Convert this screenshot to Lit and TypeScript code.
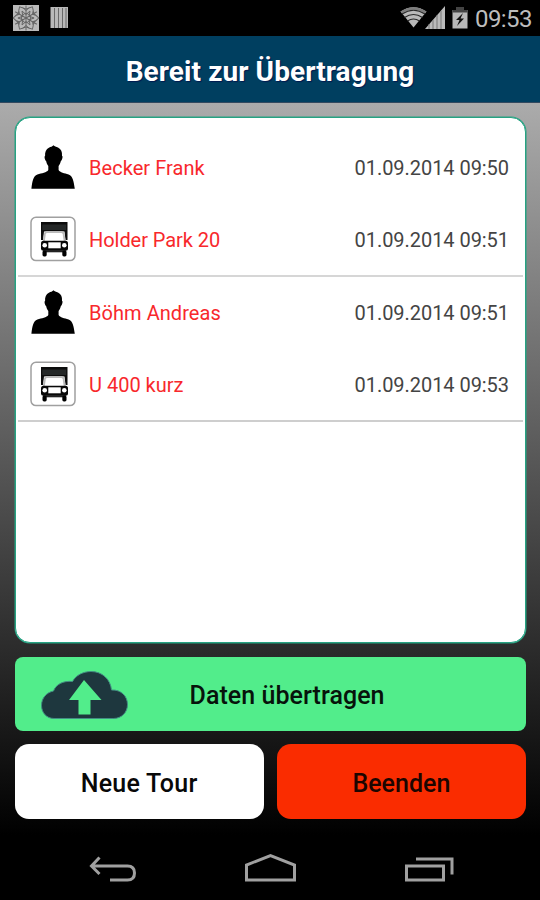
import { LitElement, html, css, svg } from "lit";
import { customElement } from "lit/decorators.js";

interface Entry {
  kind: "person" | "truck";
  name: string;
  time: string;
  fit: string;
}

const groups: Entry[][] = [
  [
    { kind: "person", name: "Becker Frank", time: "01.09.2014 09:50", fit: "a" },
    { kind: "truck", name: "Holder Park 20", time: "01.09.2014 09:51", fit: "b" },
  ],
  [
    { kind: "person", name: "Böhm Andreas", time: "01.09.2014 09:51", fit: "c" },
    { kind: "truck", name: "U 400 kurz", time: "01.09.2014 09:53", fit: "d" },
  ],
];

const person = html`<svg class="icon" width="46" height="46" viewBox="0 0 46 46">
  <path d="M23.500 1.300C24.500 2.300 26 2.700 28 3.500C31.200 5 32.300 8 32 11.800C32.800 12.100 32.600 13.500 32.200 14.800C31.900 16 31.300 16.700 30.800 17.200C30.300 19.400 29.500 20.800 28.600 22V26C30 28.600 34.500 29.200 38.600 30.400C42.800 31.700 43.800 37.500 44.800 44.800H1.400C2.200 37.500 3.200 31.700 7.400 30.400C11.700 29.200 16.800 28.600 18.300 26V22C17.400 20.800 16.600 19.400 16.200 17.200C15.600 16.700 15.100 16 14.800 14.800C14.500 13.500 14.400 12.100 15.100 11.800C14.800 8 16 5.200 18.900 3.700C20.600 2.800 22.500 2.700 23.500 1.300Z"/>
</svg>`;

const truck = html`<svg class="icon" width="46" height="46" viewBox="0 0 46 46">
  <rect x="1" y="1.200" width="44" height="43.400" rx="5" fill="#fff" stroke="#a0a0a0" stroke-width="1.500"/>
  <path d="M11 6H37.500V24H35.500L34.500 15.500H14L13 24H11Z" fill="#0c0c0c"/>
  <path d="M12.300 8.500H36.200V14H12.300Z" fill="#242727"/>
  <path d="M12.800 25L14.200 17Q14.500 15 16.500 15H32Q34 15 34.300 17L35.700 25Z" fill="#bbb"/>
  <path d="M14.800 25L15.800 18.300Q16 17 17.300 17H31.200Q32.500 17 32.700 18.300L33.700 25Z" fill="#fff"/>
  <rect x="11" y="24.800" width="27" height="10" rx="2.500" fill="#080808"/>
  <path d="M18.300 26.300H30.700V32.300H18.300Z" fill="#fff"/>
  <circle cx="14.700" cy="29.300" r="2.300" fill="#fff"/>
  <circle cx="34.300" cy="29.300" r="2.300" fill="#fff"/>
  <path d="M13 34H36V36.300H13Z" fill="#222"/>
  <rect x="12.500" y="34.500" width="4.200" height="5.900" rx="1.600"/>
  <rect x="32.300" y="34.500" width="4.200" height="5.900" rx="1.600"/>
</svg>`;

const arms = [0, 60, 120, 180, 240, 300];

@customElement("app-root")
export class AppRoot extends LitElement {
  static styles = css`
    :host { display: flex; flex-direction: column; width: 540px; height: 900px; overflow: hidden;
      background: #000; font-family: Roboto, "Liberation Sans", sans-serif; color: #000; }
    * { box-sizing: border-box; }
    svg { display: block; flex: none; }
    .status { height: 35.500px; flex: none; display: flex; justify-content: space-between; }
    .clock { display: flex; height: 36px; }
    .time { font-size: 24px; line-height: 38px; color: #bdbdbd; width: 65px; white-space: nowrap; letter-spacing: -0.600px; }
    .head { height: 67px; flex: none; background: #003f60; display: flex; justify-content: center;
      border-bottom: 1px solid #32495f; }
    h1 { margin: 0; font-size: 28px; font-weight: 700; line-height: 71px; color: #fff; white-space: nowrap;
      letter-spacing: 0.080px; text-shadow: 1px 1px 1px #001a50; }
    .body { height: 732.500px; flex: none; padding: 14.500px 14px 0 14.500px;
      background: linear-gradient(#ababab, #000); }
    .list { height: 526px; border: 1px solid #26a282; box-shadow: 0 0 0 0.500px #26a282; border-radius: 15px; background: #fff; padding: 13px 2px 0; }
    .group { height: 145.500px; border-bottom: 2px solid #d6d6d6; }
    .group:last-child { border-bottom: 2px solid #cecece; }
    .row { height: 71.700px; display: flex; align-items: center; padding: 0 14px 0 12.500px; }
    .name { margin-left: 13px; flex: 1; font-size: 20px; line-height: 24px; padding-top: 2px; color: #f8282c; white-space: nowrap; }
    .when { font-size: 20px; line-height: 24px; padding-top: 2px; color: #444; white-space: nowrap; letter-spacing: -0.050px; }
    .a { letter-spacing: 0.050px; } .b { letter-spacing: -0.050px; } .c { letter-spacing: 0.050px; } .d { letter-spacing: 0; }
    button { border: 0; padding: 2px 0 0; margin: 0; font: 500 25px Roboto, "Liberation Sans", sans-serif; color: #07130b;
      height: 75px; display: flex; align-items: center; justify-content: center; white-space: nowrap; border-radius: 14px; }
    .send { width: 100%; height: 74.500px; margin-top: 13.500px; border-radius: 8px; background: #52ed8b; justify-content: flex-start; }
    .send span { margin-left: 61px; padding-top: 2px; letter-spacing: 0.060px; }
    .pair { display: grid; grid-template-columns: 1fr 1fr; gap: 13px; margin-top: 13px; }
    .pair button { padding-top: 3px; }
    .new { background: #fff; color: #080808; letter-spacing: 0.250px; }
    .end { background: #fa2c00; color: #1c0500; }
    .cloud { margin-left: 24px; }
    .nav { flex: none; }
  `;

  render() {
    return html`
      <div class="status">
        <svg width="80" height="35" viewBox="0 0 80 35">
          <rect x="13" y="5" width="26" height="26" fill="#b9b9b9"/>
          <g stroke="#666" stroke-width="1" fill="none">
            ${arms.map(a => svg`<path transform=${`rotate(${a} 26 18)`} d="M26 18V5.500M22.500 7.500L26 10.500L29.500 7.500M22 11L26 14.500L30 11M19.500 6.800L26 9L32.500 6.800"/>`)}
            <circle cx="26" cy="18" r="4.500"/>
          </g>
          <path d="M50.500 7H68V28H50.500Z" fill="#b9b9b9"/>
          <path d="M54.500 8V28M58.500 8V28M62.500 8V28M66 8V28" stroke="#696969" stroke-width="1"/>
        </svg>
        <div class="clock">
          <svg width="75" height="35" viewBox="400 0 75 35">
            <path d="M400.500 11.500Q413.500 3 426.500 11.500L413.500 27.500Z" fill="#b9b9b9"/>
            <path d="M400.500 11.500Q413.500 3 426.500 11.500L425 13.500Q413.500 6 402 13.500Z" fill="#7d7d7d"/>
            <path d="M402 14Q413.500 6.500 425 14M404.500 17.500Q413.500 11.500 422.500 17.500M407.500 21Q413.500 17 419.500 21" fill="none" stroke="#282828" stroke-width="1.200"/>
            <path d="M445 6V29H425Z" fill="#bababa"/>
            <path d="M429 24V29M433 20V29M437 15V29M441 11V29" stroke="#777" stroke-width="1"/>
            <path d="M456 7H464V10H467.500V28.500H452.500V10H456Z" fill="#b8b8b8"/>
            <path d="M456 7H464V10H467.500V12.500H452.500V10H456Z" fill="#444"/>
            <path d="M463 13L456 20H459.500L457 26L464 18.500H460.500Z" fill="#111"/>
          </svg>
          <div class="time">09:53</div>
        </div>
      </div>
      <div class="head"><h1>Bereit zur Übertragung</h1></div>
      <div class="body">
        <div class="list">
          ${groups.map(g => html`<div class="group">${g.map(e => html`
            <div class="row">${e.kind === "person" ? person : truck}
              <span class="name ${e.fit}">${e.name}</span><span class="when">${e.time}</span>
            </div>`)}</div>`)}
        </div>
        <button class="send">
          <svg class="cloud" width="90" height="52" viewBox="39 669 90 52">
            <path d="M54 718.500C46.500 718.500 41.500 712.500 41.500 705.500C41.500 698 46.500 692.500 53.500 691C56 684.500 63 680.500 72.500 681.500C76 675 83.500 671.500 91 671.500C102 671.500 110.500 679 111.500 690C121 689.500 127.500 696 127.500 704.500C127.500 712.500 121.500 718.500 113.500 718.500Z" fill="#1e373e" stroke="#438d83" stroke-width="1"/>
            <path d="M84 680L101.500 700H90.500V714.500H78.500V700H69Z" fill="#52ed8b"/>
          </svg>
          <span>Daten übertragen</span>
        </button>
        <div class="pair"><button class="new">Neue Tour</button><button class="end">Beenden</button></div>
      </div>
      <svg class="nav" width="540" height="65" viewBox="0 834.500 540 65" fill="none" stroke="#a0a0a0" stroke-width="3">
        <path d="M99.500 857L91.500 865.500L99.500 873.500M91.500 865.500H127.500Q134.500 865.500 134.500 872.500Q134.500 879.500 127.500 879.500H110"/>
        <path d="M246.500 879.500V864.500L270.500 855L294.500 864.500V879.500Z"/>
        <path d="M406.500 865.500H443.500V879.500H406.500ZM416 858.500H452V874"/>
      </svg>
    `;
  }
}
